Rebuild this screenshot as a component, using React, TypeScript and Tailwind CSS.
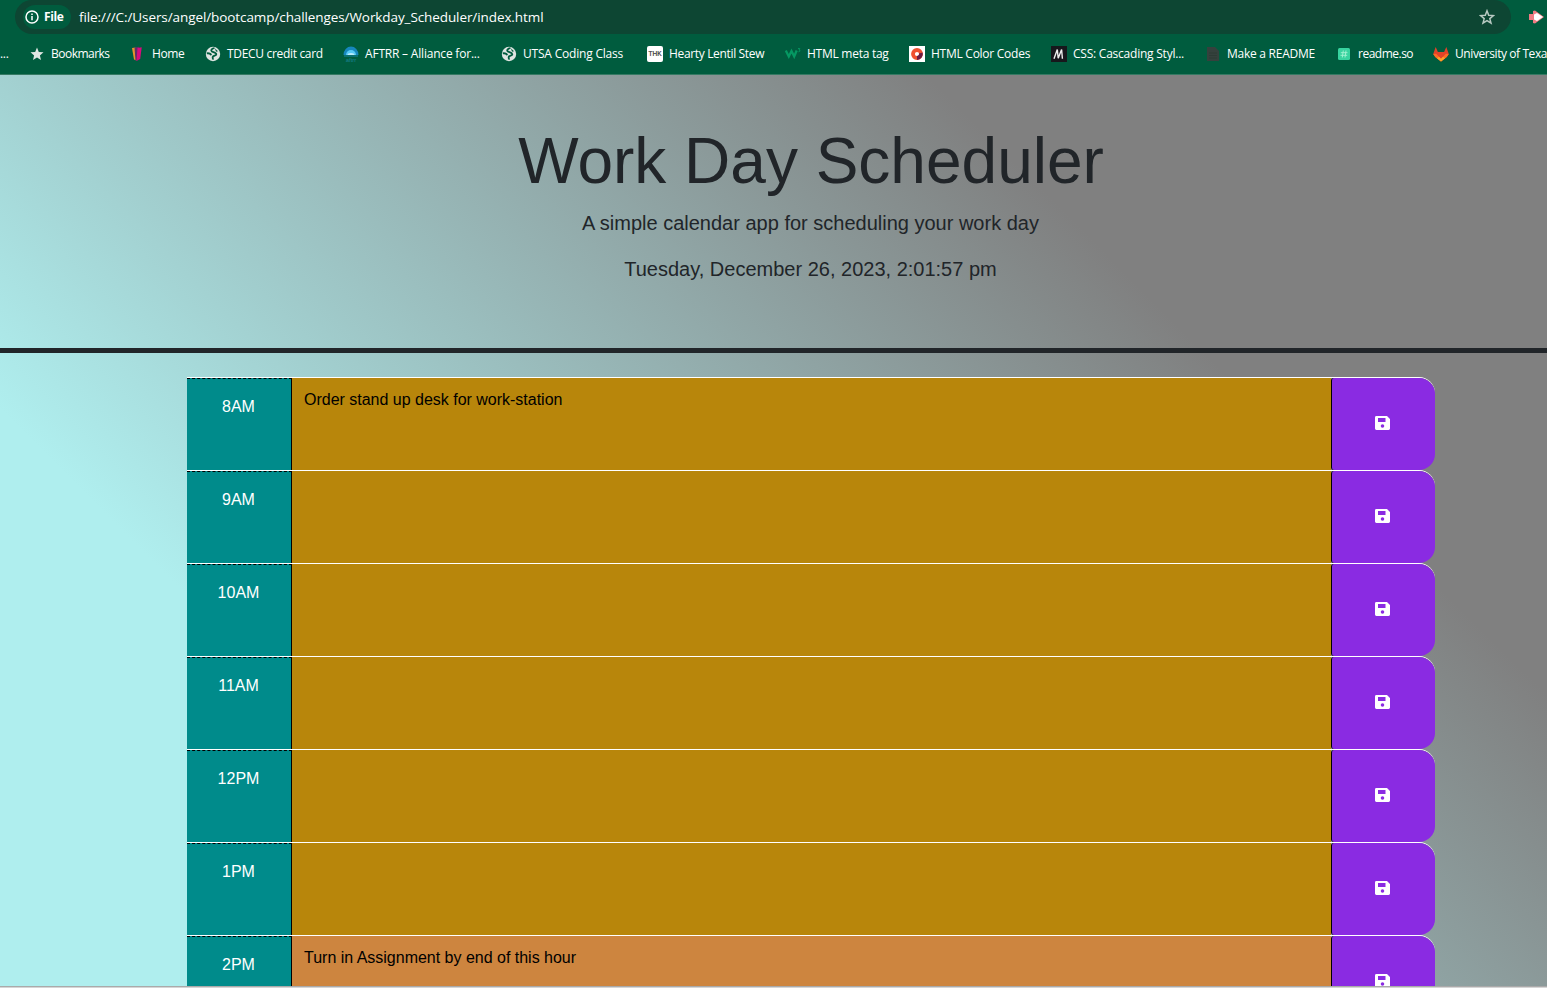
import React from "react";

const SAVE_PATH =
  "M1.400 0H12L15 3v9.600a1.400 1.400 0 0 1-1.400 1.400H1.400A1.400 1.400 0 0 1 0 12.600V1.400A1.400 1.400 0 0 1 1.400 0ZM3 2v4h7.500V2ZM7.500 8.200a1.800 1.800 0 1 0 0 3.600a1.800 1.800 0 0 0 0-3.600Z";

function Globe() {
  return (
    <svg className="size-4 shrink-0" viewBox="0 0 16 16">
      <circle cx="8" cy="8" r="7.2" fill="#dfe5e2" />
      <path
        d="M9.500 2.200C7 2.500 5.500 4.200 6.700 5.300c1 .9 4.800 1.200 4.600 3-.2 1.600-3.200 1-3.600 2.700-.2.900.5 1.300 0 2.600M1.800 7.300c2.400-.2 4 .6 4.300 1.900"
        fill="none"
        stroke="#005c3e"
        strokeWidth="1.8"
      />
      <path d="m10 2.500 3 2.700-2 .6Z" fill="#005c3e" />
    </svg>
  );
}

const icons: Record<string, React.ReactNode> = {
  star: (
    <svg className="size-4 shrink-0" viewBox="0 0 16 16">
      <path fill="#e0e7e3" d="m8 1.500 1.800 4.400 4.700.4-3.600 3.100 1.100 4.600L8 11.500 4 14l1.100-4.600-3.600-3.100 4.700-.4Z" />
    </svg>
  ),
  home: (
    <svg className="size-4 shrink-0" viewBox="0 0 16 16">
      <path fill="#e9912d" d="M2 2 5.500 1.500 6.500 14.500 4 13.500Z" />
      <path fill="#612d68" d="M4.500 1.500 9 .8 7 14.500H5.500Z" />
      <path fill="#dc087e" d="m7.500 2 4.200-.7-1.500 11.700-3.700 2Z" />
    </svg>
  ),
  globe: <Globe />,
  aftrr: (
    <svg className="size-4 shrink-0" viewBox="0 0 16 16">
      <path fill="#1687bd" d="M.5 9a7.500 8.500 0 0 1 15 0Z" />
      <path fill="#55c9f5" d="M3 9a5 5 0 0 1 10 0Z" />
      <path fill="#b9ecfb" d="M4.500 9a3.500 2 0 0 1 7 0Z" />
      <path stroke="#1685a4" d="M1 10h14" />
      <text x="8" y="15.500" textAnchor="middle" fontSize="6" fill="#1b8294" fontFamily="Liberation Sans">aftrr</text>
    </svg>
  ),
  thk: (
    <svg className="size-4 shrink-0" viewBox="0 0 16 16">
      <rect width="16" height="16" rx="2" fill="#fff" />
      <text x="8" y="10.300" textAnchor="middle" fontSize="6.500" fill="#333" stroke="#333" strokeWidth=".2" fontFamily="Liberation Sans">THK</text>
    </svg>
  ),
  w3: (
    <svg className="size-4 shrink-0" viewBox="0 0 16 16">
      <path d="m.8 4.500 3 6 2.700-5.500 2.700 5.500 2.500-6" fill="none" stroke="#059862" strokeWidth="2.300" />
      <path d="M13 2.500h1.800l-.8 1.500q1.500 0 .8 1.300l-1.300.5" fill="none" stroke="#059862" strokeWidth=".9" />
    </svg>
  ),
  codes: (
    <svg className="size-4 shrink-0" viewBox="0 0 16 16">
      <path fill="#fff" d="M0 0h16v16H0z" />
      <circle cx="8" cy="8" r="4" fill="none" stroke="#ef5030" strokeWidth="3.800" />
      <path d="M11.800 7A4 4 0 0 1 8 12" fill="none" stroke="#6b1c43" strokeWidth="3.800" />
    </svg>
  ),
  mdn: (
    <svg className="size-4 shrink-0" viewBox="0 0 16 16">
      <path fill="#17171c" d="M0 0h16v16H0z" />
      <path d="M3 12.700 6.300 3.500l.9 8.700 3.400-8.700.8 9.200" fill="none" stroke="#eee" strokeWidth="1.400" />
    </svg>
  ),
  file: (
    <svg className="size-4 shrink-0" viewBox="0 0 16 16">
      <path fill="#35413d" d="M2 1h8l4 4v10H2Z" />
      <path d="M4 7h8M4 9.500h8M4 12h8" stroke="#2c3a34" strokeWidth=".8" />
    </svg>
  ),
  readme: (
    <svg className="size-4 shrink-0" viewBox="0 0 16 16">
      <rect x="2" y="2" width="12" height="12" rx="1.500" fill="#38d39f" />
      <path d="m7.300 4.500-1 7m3.700-7-1 7M4.800 6.700h6.700M4.500 9.300h6.700" stroke="#a5f3d4" strokeWidth=".9" />
    </svg>
  ),
  gitlab: (
    <svg className="size-4 shrink-0" viewBox="0 0 16 16">
      <path fill="#e24329" d="m.2 8 2.500-7 2.200 5h6.200l2.200-5 2.500 7-2 3L8 15.500 2.200 11Z" />
      <path fill="#fc6d26" d="m.2 8 3-.2L8 13l4.800-5.200 3 .2-2 3L8 15.500 2.200 11Z" />
      <path fill="#e24329" d="M3.500 7h9L8 12.500Z" />
      <path fill="#fca326" d="M4 12.300 6 10.700l2 2 2-2 2 1.600-4 3.200Z" />
    </svg>
  ),
};

const bookmarks = [
  { icon: "star", label: "Bookmarks", slot: "w-[101px]", tracking: "tracking-[-0.52px]" },
  { icon: "home", label: "Home", slot: "w-[75px]", tracking: "tracking-[-0.4px]" },
  { icon: "globe", label: "TDECU credit card", slot: "w-[138px]", tracking: "tracking-[-0.32px]" },
  { icon: "aftrr", label: "AFTRR – Alliance for...", slot: "w-[158px]", tracking: "tracking-[-0.2px]" },
  { icon: "globe", label: "UTSA Coding Class", slot: "w-[146px]", tracking: "tracking-[-0.2px]" },
  { icon: "thk", label: "Hearty Lentil Stew", slot: "w-[138px]", tracking: "tracking-[-0.34px]" },
  { icon: "w3", label: "HTML meta tag", slot: "w-[124px]", tracking: "tracking-[-0.26px]" },
  { icon: "codes", label: "HTML Color Codes", slot: "w-[142px]", tracking: "tracking-[-0.26px]" },
  { icon: "mdn", label: "CSS: Cascading Styl...", slot: "w-[154px]", tracking: "tracking-[-0.23px]" },
  { icon: "file", label: "Make a README", slot: "w-[131px]", tracking: "tracking-[-0.26px]" },
  { icon: "readme", label: "readme.so", slot: "w-[97px]", tracking: "tracking-[-0.5px]" },
  { icon: "gitlab", label: "University of Texa", slot: "w-[140px]", tracking: "tracking-[-0.42px]" },
];

function BrowserBar() {
  return (
    <div className="h-[75px] shrink-0 overflow-hidden border-b border-[#357a63] bg-[#005c3e] font-['Open_Sans',sans-serif] text-white">
      <div className="flex h-[34px] items-center">
        <div className="ml-[15px] flex h-[34px] w-[1496px] shrink-0 items-center rounded-[17px] bg-[#0d4633] pl-2">
          <div className="flex h-6 w-12 items-center gap-[5px] rounded-full bg-[#005c3e] pl-0.5 text-xs font-bold">
            <svg className="size-[14px] shrink-0" viewBox="0 0 14 14" fill="none" stroke="#fff" strokeWidth="1.500">
              <circle cx="7" cy="7" r="6" />
              <path d="M7 6v4.200M7 3.500v1.500" />
            </svg>
            <span className="tracking-[-0.4px]">File</span>
          </div>
          <span className="ml-2 text-[13.5px] tracking-[-0.09px]">file:///C:/Users/angel/bootcamp/challenges/Workday_Scheduler/index.html</span>
          <svg className="mr-4 ml-auto size-4" viewBox="0 0 16 16" fill="none" stroke="#b8c9c2" strokeWidth="1.500">
            <path d="m8 1.800 1.700 4.400 4.700.4-3.600 3 1.200 4.500-4-2.500-4 2.500 1.200-4.500-3.600-3 4.700-.4Z" />
          </svg>
        </div>
        <svg className="ml-[18px] h-4 w-[15px] shrink-0" viewBox="0 0 15 16">
          <path fill="#f07c83" d="M0 5h4V2l2-.5L15 8 6 14.500 4 14v-3H0Z" />
          <path fill="#fff" d="M5 5.500 8 4l6 4-6 4-3-1.500Z" />
        </svg>
      </div>
      <div className="flex h-10 items-center text-xs">
        <span className="w-[29px] shrink-0 tracking-[-0.3px]">...</span>
        {bookmarks.map((b) => (
          <div key={b.label} className={`flex shrink-0 items-center ${b.slot}`}>
            {icons[b.icon]}
            <span className={`ml-1.5 whitespace-nowrap ${b.tracking}`}>{b.label}</span>
          </div>
        ))}
      </div>
    </div>
  );
}

const hours = [
  { hour: "8AM", task: "Order stand up desk for work-station", tone: "bg-[#b8860b]" },
  { hour: "9AM", task: "", tone: "bg-[#b8860b]" },
  { hour: "10AM", task: "", tone: "bg-[#b8860b]" },
  { hour: "11AM", task: "", tone: "bg-[#b8860b]" },
  { hour: "12PM", task: "", tone: "bg-[#b8860b]" },
  { hour: "1PM", task: "", tone: "bg-[#b8860b]" },
  { hour: "2PM", task: "Turn in Assignment by end of this hour", tone: "bg-[#cd853f]" },
];

export default function App() {
  return (
    <div className="flex h-[988px] w-[1547px] flex-col overflow-hidden font-['Liberation_Sans',Arial,sans-serif] text-[#212529]">
      <BrowserBar />
      <main className="h-[911px] shrink-0 overflow-hidden bg-[linear-gradient(45deg,#afeeee_408px,#808080_1300px)]">
        <div className="w-[1622px]">
          <header className="flex h-[278px] flex-col items-center border-b-[5px] border-[#212529] pt-12 text-center">
            <h1 className="text-[64px] leading-[77px]">Work Day Scheduler</h1>
            <p className="mt-2 pr-px text-[20px] leading-[30px]">A simple calendar app for scheduling your work day</p>
            <p className="mt-4 pr-px text-[20px] leading-[30px]">Tuesday, December 26, 2023, 2:01:57 pm</p>
          </header>
          <section className="mt-6 ml-[187px] w-[1248px] text-base leading-6">
            {hours.map((h) => (
              <div key={h.hour} className="flex h-[93px] rounded-r-[16px] border-t border-white">
                <div className="w-[105px] shrink-0 border-t border-r border-dashed border-t-black border-r-black bg-[#008b8b] pt-4 pr-px text-center text-white [border-right-style:solid]">{h.hour}</div>
                <div className={`w-[1039px] shrink-0 px-3 pt-[10px] tracking-[-0.01px] text-black ${h.tone}`}>{h.task}</div>
                <button className="flex w-[104px] shrink-0 items-center justify-center rounded-r-[16px] rounded-l-[3px] border-l border-black bg-[#8a2be2] pr-0.5 pb-0.5">
                  <svg className="h-[14px] w-[15px]" viewBox="0 0 15 14" fill="#fff" fillRule="evenodd">
                    <path d={SAVE_PATH} />
                  </svg>
                </button>
              </div>
            ))}
          </section>
        </div>
      </main>
      <div className="h-0.5 shrink-0 border-t border-[#aaa] bg-[#d5d5d5]" />
    </div>
  );
}
